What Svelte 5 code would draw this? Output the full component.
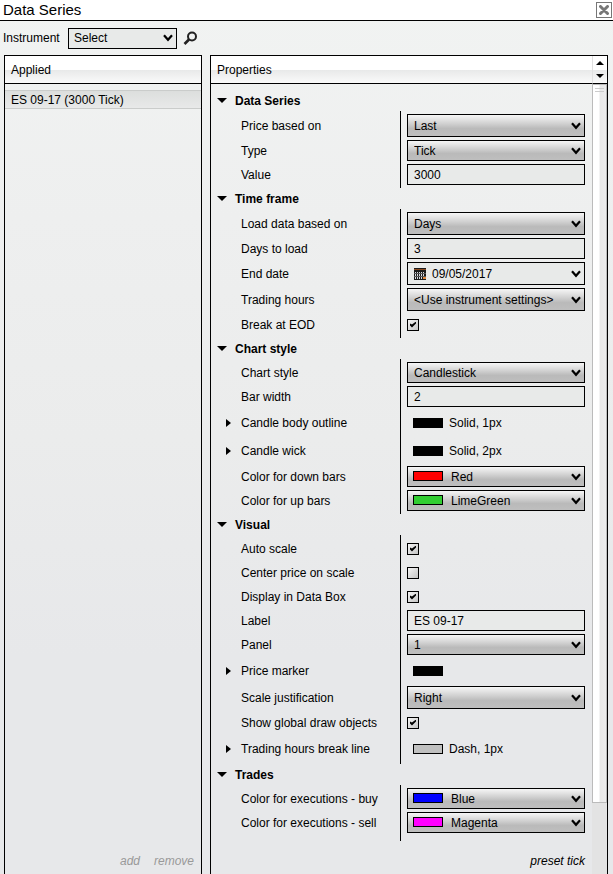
<script lang="ts">
	type Row = {
		id: string;
		label: string;
		kind: 'select' | 'text' | 'date' | 'check' | 'stroke';
		value?: string;
		checked?: boolean;
		color?: string;
		tall?: boolean;
	};

	type Section = { title: string; open: boolean; rows: Row[] };

	let sections: Section[] = [
		{
			title: 'Data Series',
			open: true,
			rows: [
				{ id: 'price', label: 'Price based on', kind: 'select', value: 'Last', tall: true },
				{ id: 'type', label: 'Type', kind: 'select', value: 'Tick' },
				{ id: 'value', label: 'Value', kind: 'text', value: '3000' }
			]
		},
		{
			title: 'Time frame',
			open: true,
			rows: [
				{ id: 'load', label: 'Load data based on', kind: 'select', value: 'Days', tall: true },
				{ id: 'days', label: 'Days to load', kind: 'text', value: '3' },
				{ id: 'end', label: 'End date', kind: 'date', value: '09/05/2017', tall: true },
				{ id: 'hours', label: 'Trading hours', kind: 'select', value: '<Use instrument settings>', tall: true },
				{ id: 'eod', label: 'Break at EOD', kind: 'check', checked: true }
			]
		},
		{
			title: 'Chart style',
			open: true,
			rows: [
				{ id: 'style', label: 'Chart style', kind: 'select', value: 'Candlestick' },
				{ id: 'width', label: 'Bar width', kind: 'text', value: '2' },
				{ id: 'outline', label: 'Candle body outline', kind: 'stroke', value: 'Solid, 1px', color: '#000' },
				{ id: 'wick', label: 'Candle wick', kind: 'stroke', value: 'Solid, 2px', color: '#000' },
				{ id: 'down', label: 'Color for down bars', kind: 'select', value: 'Red', color: 'red' },
				{ id: 'up', label: 'Color for up bars', kind: 'select', value: 'LimeGreen', color: 'limegreen' }
			]
		},
		{
			title: 'Visual',
			open: true,
			rows: [
				{ id: 'auto', label: 'Auto scale', kind: 'check', checked: true },
				{ id: 'center', label: 'Center price on scale', kind: 'check', checked: false },
				{ id: 'box', label: 'Display in Data Box', kind: 'check', checked: true },
				{ id: 'label', label: 'Label', kind: 'text', value: 'ES 09-17' },
				{ id: 'panel', label: 'Panel', kind: 'select', value: '1' },
				{ id: 'marker', label: 'Price marker', kind: 'stroke', value: '', color: '#000' },
				{ id: 'scale', label: 'Scale justification', kind: 'select', value: 'Right', tall: true },
				{ id: 'global', label: 'Show global draw objects', kind: 'check', checked: true },
				{ id: 'break', label: 'Trading hours break line', kind: 'stroke', value: 'Dash, 1px', color: '#c0c0c0' }
			]
		},
		{
			title: 'Trades',
			open: true,
			rows: [
				{ id: 'buy', label: 'Color for executions - buy', kind: 'select', value: 'Blue', color: 'blue' },
				{ id: 'sell', label: 'Color for executions - sell', kind: 'select', value: 'Magenta', color: 'magenta' }
			]
		}
	];
</script>

{#snippet chevron()}
	<svg class="chevron" width="10" height="8" viewBox="0 0 10 8" aria-hidden="true">
		<path d="M1 1.2L5 5.8L9 1.2" fill="none" stroke="#000" stroke-width="2.2" />
	</svg>
{/snippet}

<div class="window">
	<header class="titlebar">
		<h1>Data Series</h1>
		<button class="close" aria-label="Close">
			<svg width="10" height="10" viewBox="0 0 10 10">
				<path d="M1.5 1.5L8.5 8.5M8.5 1.5L1.5 8.5" stroke="#777" stroke-width="3" stroke-linecap="round" />
			</svg>
		</button>
	</header>

	<div class="toolbar">
		<label for="instrument">Instrument</label>
		<span class="field instrument">
			<select id="instrument" class="flat"><option>Select</option></select>
			{@render chevron()}
		</span>
		<button class="search" aria-label="Search">
			<svg width="15" height="15" viewBox="0 0 15 15">
				<circle cx="9" cy="5.5" r="4" fill="none" stroke="#222" stroke-width="2" />
				<path d="M6 8.5L1.5 13" stroke="#222" stroke-width="2.6" />
			</svg>
		</button>
	</div>

	<main class="panels">
		<section class="panel applied">
			<h2 class="head">Applied</h2>
			<ul>
				<li><button class="series">ES 09-17 (3000 Tick)</button></li>
			</ul>
			<footer>
				<a class="muted" href="#add">add</a>
				<a class="muted" href="#remove">remove</a>
			</footer>
		</section>

		<section class="panel properties">
			<div class="main">
				<h2 class="head">Properties</h2>
				<div class="groups">
					{#each sections as section}
						<button class="group-title" aria-expanded={section.open} on:click={() => (section.open = !section.open)}>
							<svg class:closed={!section.open} width="10" height="5" viewBox="0 0 10 5">
								<path d="M0 0H10L5 5Z" />
							</svg>
							{section.title}
						</button>
						{#if section.open}
							<div class="rows">
								{#each section.rows as row}
									<div class="row" class:stroke={row.kind === 'stroke'} class:tall={row.tall}>
										{#if row.kind === 'stroke'}
											<button class="name expand">
												<svg width="5" height="8" viewBox="0 0 5 8"><path d="M0 0L5 4L0 8Z" /></svg>
												{row.label}
											</button>
										{:else}
											<label class="name" for={row.id}>{row.label}</label>
										{/if}
										<div class="cell">
											{#if row.kind === 'select'}
												<span class="field" class:colored={row.color}>
													<select id={row.id}><option>{row.value}</option></select>
													{#if row.color}
														<i class="swatch" style="background: {row.color}"></i>
													{/if}
													{@render chevron()}
												</span>
											{:else if row.kind === 'text'}
												<input id={row.id} class="textbox" type="text" bind:value={row.value} />
											{:else if row.kind === 'date'}
												<span class="field date">
													<input id={row.id} class="textbox" type="text" bind:value={row.value} />
													<svg class="calendar" width="12" height="12" viewBox="0 0 12 12" aria-hidden="true">
														<rect width="12" height="12" fill="#1a1a1a" />
														<rect y="1" width="12" height="1" fill="#8a4a20" />
														<path d="M1 4h1v7H1zM3 4h1v7H3zM5 4h1v7H5zM7 4h1v7H7zM9 4h1v5H9z" fill="#d8dde4" />
														<path d="M0 5h12v1H0zM0 8h12v1H0z" fill="#555" />
														<rect x="9" y="9" width="3" height="2" fill="#e08a40" />
													</svg>
													<button class="drop" aria-label="Pick a date">{@render chevron()}</button>
												</span>
											{:else if row.kind === 'check'}
												<input id={row.id} type="checkbox" bind:checked={row.checked} />
											{:else}
												<i class="swatch" style="background: {row.color}"></i>
												<span>{row.value}</span>
											{/if}
										</div>
									</div>
								{/each}
							</div>
						{/if}
					{/each}
				</div>
				<footer><a href="#preset">preset tick</a></footer>
			</div>

			<div class="scroll">
				<div class="arrows">
					<button aria-label="Scroll up"><svg width="8" height="4" viewBox="0 0 8 4"><path d="M0 4H8L4 0Z" /></svg></button>
					<button aria-label="Scroll down"><svg width="8" height="4" viewBox="0 0 8 4"><path d="M0 0H8L4 4Z" /></svg></button>
				</div>
				<div class="thumb"><i></i><i></i></div>
				<div class="track"></div>
			</div>
		</section>
	</main>
</div>

<style>
	:global(body) {
		background: #e7e8ea;
	}

	.window {
		display: flex;
		flex-direction: column;
		min-height: 100vh;
		background: linear-gradient(#f1f3f2, #eeefef 25%, #ebecec 50%, #e7e8ea 75%);
		color: #000;
		font: 12px/14px "Liberation Sans", Arial, sans-serif;
	}

	button,
	input,
	select {
		box-sizing: border-box;
		margin: 0;
		padding: 0;
		border: 0;
		border-radius: 0;
		background: none;
		color: inherit;
		font: inherit;
		appearance: none;
	}

	svg {
		display: block;
	}

	h1,
	h2,
	ul {
		margin: 0;
		padding: 0;
		font-weight: normal;
		list-style: none;
	}

	.titlebar {
		display: flex;
		align-items: center;
		justify-content: space-between;
		height: 20px;
		padding: 0 1px 0 3px;
		border-bottom: 1px solid #000;
		background: #fff;
	}

	h1 {
		font-size: 15px;
		line-height: 18px;
	}

	.close {
		display: grid;
		place-items: center;
		width: 16px;
		height: 16px;
		border: 1px solid #777;
	}

	.toolbar {
		display: flex;
		align-items: center;
		gap: 6px;
		height: 34px;
		padding-left: 3px;
	}

	.toolbar label {
		width: 59px;
	}

	.field {
		position: relative;
		display: block;
		width: 100%;
	}

	.instrument {
		width: 109px;
	}

	select,
	.textbox {
		display: block;
		width: 100%;
		height: 21px;
		padding: 0 6px;
		border: 1px solid #000;
		background: #e8eae9;
	}

	select {
		background: linear-gradient(#f6f6f6, #d2d2d2 40%, #bababa 65%, #bebebe);
	}

	select.flat {
		padding-left: 5px;
		background: #e8eae9;
	}

	.tall select,
	.tall .textbox {
		height: 23px;
	}

	.chevron {
		position: absolute;
		top: 50%;
		right: 4px;
		margin-top: -4px;
		pointer-events: none;
	}

	.panels {
		display: grid;
		flex: 1;
		grid-template-columns: 198px 1fr;
		gap: 8px;
		padding: 0 5px 0 4px;
	}

	.panel {
		border: 1px solid #000;
		border-bottom: 0;
	}

	.head,
	.arrows {
		height: 27px;
		border-bottom: 1px solid #000;
		background: linear-gradient(#fff 50%, #e8e9e9 52%, #fafafa);
	}

	.head {
		padding-left: 6px;
		font-size: 12px;
		line-height: 28px;
	}

	.applied,
	.main {
		display: flex;
		flex-direction: column;
	}

	.applied ul {
		flex: 1;
		padding-top: 6px;
	}

	.series {
		width: 100%;
		height: 19px;
		padding-left: 6px;
		border: solid #cacccb;
		border-width: 1px 0;
		background: linear-gradient(#dcdedd, #e8e9e9);
		text-align: left;
	}

	footer {
		display: flex;
		justify-content: flex-end;
		gap: 14px;
		padding: 0 7px 6px 0;
		font-style: italic;
	}

	a {
		color: inherit;
		text-decoration: none;
	}

	.muted {
		color: #999;
	}

	.properties {
		display: grid;
		grid-template-columns: 1fr 15px;
	}

	.groups {
		flex: 1;
		padding: 6px 7px 0 0;
	}

	.group-title {
		display: flex;
		align-items: center;
		gap: 8px;
		width: 100%;
		height: 21px;
		padding-left: 6px;
		font-weight: bold;
	}

	.closed {
		transform: rotate(-90deg);
	}

	.rows {
		padding-top: 3px;
		background: linear-gradient(#000, #000) 189px 0 / 1px 100% no-repeat;
	}

	.rows:last-child {
		padding-bottom: 5px;
	}

	.row {
		display: grid;
		grid-template-columns: 190px 1fr;
		align-items: center;
		height: 21px;
		padding-bottom: 3px;
	}

	.row.tall {
		height: 23px;
	}

	.row.stroke {
		height: 25px;
	}

	.name {
		padding-left: 30px;
	}

	.expand {
		display: flex;
		align-items: center;
		gap: 10px;
		padding-left: 15px;
	}

	.cell {
		display: flex;
		align-items: center;
		gap: 6px;
		padding-left: 6px;
	}

	.swatch {
		box-sizing: border-box;
		width: 30px;
		height: 10px;
		border: 1px solid #000;
	}

	.stroke .swatch {
		margin-left: 6px;
	}

	.colored select {
		padding-left: 43px;
	}

	.colored .swatch {
		position: absolute;
		top: 5px;
		left: 6px;
		pointer-events: none;
	}

	.date .textbox {
		padding-left: 24px;
	}

	.calendar {
		position: absolute;
		top: 6px;
		left: 7px;
	}

	.drop {
		position: absolute;
		inset: 0 0 0 auto;
		width: 20px;
	}

	input[type='checkbox'] {
		width: 12px;
		height: 12px;
		border: 1px solid #000;
		background: linear-gradient(135deg, #f4f4f4, #c4c4c4);
	}

	input[type='checkbox']:checked::before {
		content: '';
		display: block;
		width: 6px;
		height: 6px;
		margin: 2px;
		background: #000;
		clip-path: polygon(0 33%, 33% 50%, 100% 0, 100% 33%, 33% 100%, 0 67%);
	}

	.scroll {
		display: flex;
		flex-direction: column;
	}

	.arrows {
		display: grid;
		border-left: 1px solid #e0e0e0;
	}

	.arrows button {
		display: grid;
		place-items: center;
	}

	.thumb {
		flex: 10;
		padding: 3px 2px;
		border: 1px solid #bbb;
		background: linear-gradient(90deg, #fff 45%, #e8e8e8 55%, #ececec);
	}

	.thumb i {
		display: block;
		height: 1px;
		margin-bottom: 2px;
		background: #ccc;
	}

	.track {
		flex: 1;
		background: #e3e3e3;
	}
</style>
